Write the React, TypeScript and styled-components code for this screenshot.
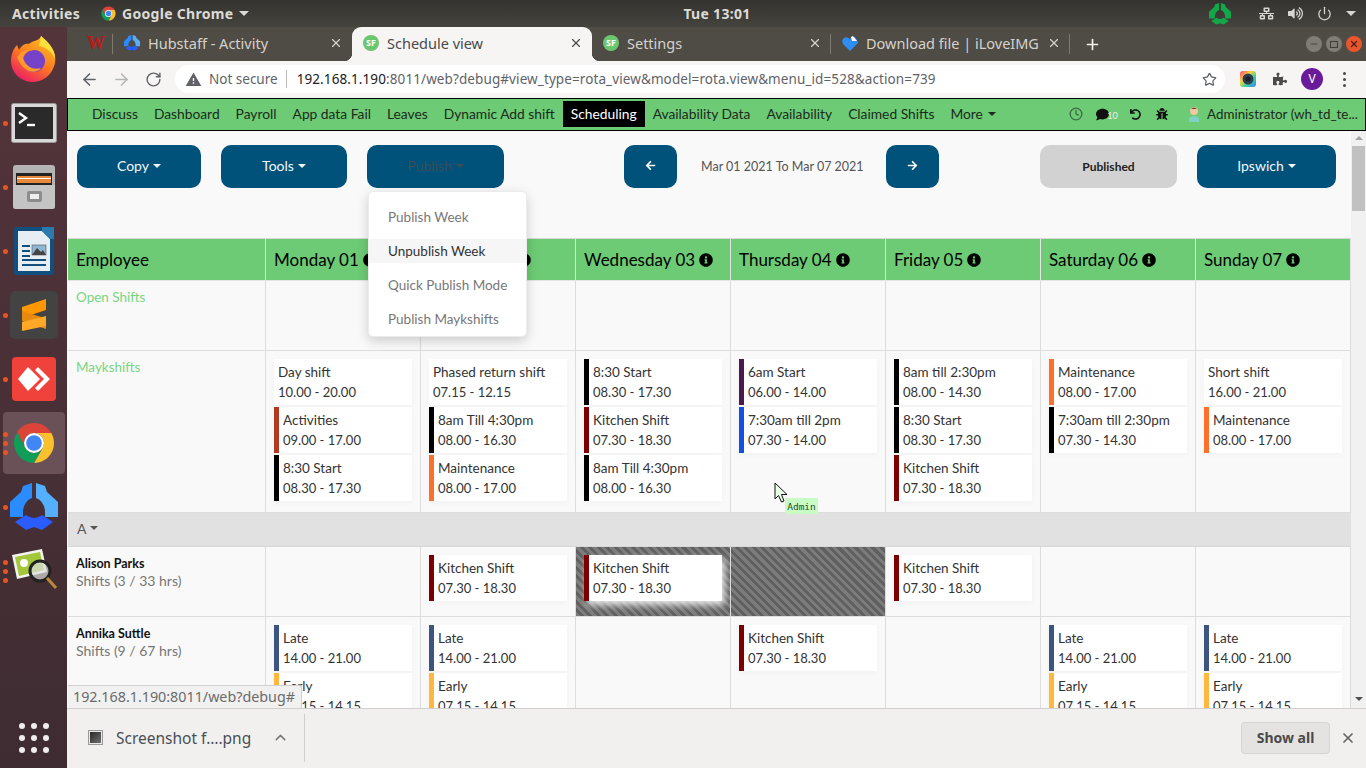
import React from "react";
import styled, { createGlobalStyle } from "styled-components";
import { ArrowLeft, ArrowRight, RotateCw, Star, X, Plus, ChevronUp, Minus, Clock } from "lucide-react";
import {
  FaArrowLeft,
  FaArrowRight,
  FaBug,
  FaComment,
  FaInfoCircle,
  FaNetworkWired,
  FaPuzzlePiece,
  FaUndo,
  FaVolumeUp,
} from "react-icons/fa";
import { FiPower } from "react-icons/fi";
import { MdWarning } from "react-icons/md";

const pageFont = `Lato, "Open Sans", sans-serif`;
const uiFont = `"Noto Sans", "Open Sans", sans-serif`;

const GlobalStyle = createGlobalStyle`
  html, body { margin: 0; padding: 0; width: 1366px; height: 768px; overflow: hidden; }
  * { box-sizing: border-box; }
`;

const Screen = styled.div`
  width: 1366px;
  height: 768px;
  display: flex;
  flex-direction: column;
  overflow: hidden;
  font-family: ${uiFont};
`;

const TopBar = styled.div`
  height: 27px;
  flex: none;
  display: flex;
  align-items: center;
  position: relative;
  padding-left: 12px;
  color: #dcdad5;
  font-size: 14px;
  font-weight: 700;
  letter-spacing: 0.3px;
  background: linear-gradient(#34332f, #45433e);
`;

const TopLabel = styled.span<{ $ml?: number }>`
  margin-left: ${(p) => p.$ml ?? 0}px;
  display: flex;
  align-items: center;
  white-space: nowrap;
`;

const Clockface = styled.span`
  position: absolute;
  left: 68px;
  right: 0;
  text-align: center;
  pointer-events: none;
`;

const Tray = styled.div`
  margin-left: auto;
  display: flex;
  align-items: center;
  padding-right: 10px;
  gap: 14px;
  color: #d8d6d0;
`;

const Caret = styled.span<{ $color?: string; $size?: number; $ml?: number }>`
  display: inline-block;
  width: 0;
  height: 0;
  margin-left: ${(p) => p.$ml ?? 4}px;
  border-left: ${(p) => p.$size ?? 4}px solid transparent;
  border-right: ${(p) => p.$size ?? 4}px solid transparent;
  border-top: ${(p) => p.$size ?? 4}px solid ${(p) => p.$color ?? "currentColor"};
`;

const Main = styled.div`
  flex: 1;
  display: flex;
  min-height: 0;
`;

const Dock = styled.aside`
  width: 67px;
  flex: none;
  display: flex;
  flex-direction: column;
  align-items: center;
  padding-top: 1px;
  gap: 2px;
  background: linear-gradient(#54343b, #3e2c32);
`;

const DockItem = styled.div<{ $active?: boolean }>`
  position: relative;
  width: 62px;
  height: 62px;
  flex: none;
  display: flex;
  align-items: center;
  justify-content: center;
  border-radius: 4px;
  background: ${(p) => (p.$active ? "#6a5158" : "transparent")};
`;

const DockDots = styled.div`
  position: absolute;
  left: 0;
  top: 0;
  bottom: 0;
  display: flex;
  flex-direction: column;
  justify-content: center;
  gap: 4px;
`;

const DockDot = styled.span`
  width: 5px;
  height: 5px;
  border-radius: 50%;
  background: #e95420;
`;

const AppGrid = styled.div`
  margin-top: auto;
  height: 60px;
  display: grid;
  grid-template-columns: repeat(3, 6px);
  gap: 6px;
  align-content: center;
`;

const AppDot = styled.span`
  width: 6px;
  height: 6px;
  border-radius: 50%;
  background: #f0eeee;
`;

const Chrome = styled.div`
  flex: 1;
  min-width: 0;
  display: flex;
  flex-direction: column;
`;

const TabStrip = styled.div`
  height: 34px;
  flex: none;
  display: flex;
  align-items: stretch;
  background: #4f4c45;
  color: #d5d2cc;
  font-size: 14.5px;
`;

const Tab = styled.div<{ $w: number; $active?: boolean; $sep?: boolean }>`
  width: ${(p) => p.$w}px;
  flex: none;
  position: relative;
  display: flex;
  align-items: center;
  padding: 0 9px 2px 11px;
  gap: 8px;
  white-space: nowrap;
  background: ${(p) => (p.$active ? "#f6f5f4" : "transparent")};
  color: ${(p) => (p.$active ? "#4a4a4a" : "#d5d2cc")};
  border-radius: ${(p) => (p.$active ? "9px 9px 0 0" : "0")};
  &::before {
    content: "";
    display: ${(p) => (p.$active ? "block" : "none")};
    position: absolute;
    left: -8px;
    bottom: 0;
    width: 8px;
    height: 8px;
    background: radial-gradient(circle at 0 0, transparent 8px, #f6f5f4 8.5px);
  }
  &::after {
    content: "";
    display: ${(p) => (p.$sep || p.$active ? "block" : "none")};
    position: absolute;
    right: ${(p) => (p.$active ? "-8px" : "0")};
    top: ${(p) => (p.$active ? "auto" : "7px")};
    bottom: ${(p) => (p.$active ? "0" : "7px")};
    width: ${(p) => (p.$active ? "8px" : "1px")};
    height: ${(p) => (p.$active ? "8px" : "auto")};
    background: ${(p) =>
      p.$active ? "radial-gradient(circle at 100% 0, transparent 8px, #f6f5f4 8.5px)" : "#7c7970"};
  }
`;

const TabTitle = styled.span`
  flex: 1;
  overflow: hidden;
`;

const Favicon = styled.span`
  width: 16px;
  height: 16px;
  flex: none;
  border-radius: 50%;
  background: #6cc56f;
  color: #fff;
  font-size: 9px;
  line-height: 16px;
  font-weight: 700;
  text-align: center;
`;

const PinnedMark = styled.span`
  font-family: "Liberation Serif", serif;
  font-weight: 700;
  font-size: 18px;
  color: #c01818;
  margin-left: 9px;
`;

const WindowButtons = styled.div`
  margin-left: auto;
  display: flex;
  align-items: center;
  gap: 4px;
  padding-right: 4px;
`;

const WindowButton = styled.span<{ $close?: boolean }>`
  width: 16px;
  height: 16px;
  border-radius: 50%;
  display: flex;
  align-items: center;
  justify-content: center;
  color: ${(p) => (p.$close ? "#4a2015" : "#3e3d39")};
  background: ${(p) => (p.$close ? "#e9562c" : "#7f7c75")};
`;

const Maximise = styled.span`
  width: 8px;
  height: 7px;
  border: 1px solid #3e3d39;
`;

const NewTab = styled.span`
  display: flex;
  align-items: center;
  margin-left: 14px;
  color: #f0efec;
`;

const Toolbar = styled.div`
  height: 37px;
  flex: none;
  display: flex;
  align-items: center;
  background: #f6f5f4;
  padding: 0 0 1px 6px;
  color: #5f6368;
`;

const NavIcon = styled.span<{ $w?: number }>`
  width: ${(p) => p.$w ?? 32}px;
  display: flex;
  justify-content: center;
`;

const UrlPill = styled.div`
  width: 1050px;
  height: 28px;
  margin-left: 6px;
  display: flex;
  align-items: center;
  border-radius: 14px;
  background: #fff;
  padding: 0 8px 0 10px;
  font-size: 13.5px;
`;

const NotSecure = styled.span`
  margin-left: 7px;
  padding-right: 8px;
  border-right: 1px solid #b9bbbe;
  line-height: 18px;
  color: #5f6368;
`;

const Host = styled.span`
  margin-left: 10px;
  color: #202124;
  letter-spacing: 0.1px;
`;

const UrlRest = styled.span`
  color: #5f6368;
  letter-spacing: 0.1px;
  flex: 1;
`;

const ProfileBadge = styled.span`
  width: 22px;
  height: 22px;
  border-radius: 50%;
  background: #6a1b9a;
  color: #fff;
  font-size: 12px;
  line-height: 22px;
  text-align: center;
`;

const MenuDots = styled.span`
  display: flex;
  flex-direction: column;
  gap: 3px;
`;

const MenuDot = styled.span`
  width: 3px;
  height: 3px;
  border-radius: 50%;
  background: #4a4a4a;
`;

const WebPage = styled.div`
  flex: 1;
  min-height: 0;
  display: flex;
  flex-direction: column;
  font-family: ${pageFont};
`;

const Navbar = styled.nav`
  height: 33px;
  flex: none;
  display: flex;
  align-items: center;
  padding: 0 0 1px 16px;
  border: 1px solid #000;
  background: #6ccb74;
  font-size: 13.8px;
  color: #1c2a20;
`;

const NavLink = styled.span<{ $active?: boolean }>`
  height: 26px;
  line-height: 26px;
  padding: 0 8px;
  white-space: nowrap;
  background: ${(p) => (p.$active ? "#000" : "transparent")};
  color: ${(p) => (p.$active ? "#fff" : "inherit")};
  display: flex;
  align-items: center;
`;

const NavTools = styled.div`
  margin-left: auto;
  display: flex;
  align-items: center;
  color: #111;
  padding-right: 5px;
`;

const NavTool = styled.span<{ $w: number }>`
  width: ${(p) => p.$w}px;
  display: flex;
  align-items: center;
  justify-content: center;
`;

const ChatCount = styled.span`
  color: #f0f0f0;
  font-size: 9px;
  margin-left: -2px;
  padding-top: 3px;
`;

const UserName = styled.span`
  width: 153px;
  color: #1c2a20;
  font-size: 13.4px;
  white-space: nowrap;
`;

const Content = styled.div`
  flex: 1;
  min-height: 0;
  position: relative;
  display: flex;
  background: #f9f9f9;
  overflow: hidden;
`;

const Scroller = styled.div`
  flex: 1;
  min-width: 0;
  margin-left: 1px;
  overflow: hidden;
`;

const Actions = styled.div`
  height: 107px;
  display: flex;
  align-items: flex-start;
  padding: 14px 15px 0 9px;
`;

const ActionGroup = styled.div<{ $ml?: string; $gap: number }>`
  display: flex;
  align-items: center;
  gap: ${(p) => p.$gap}px;
  margin-left: ${(p) => p.$ml ?? "0"};
`;

const ActionButton = styled.button<{ $w: number; $muted?: boolean }>`
  width: ${(p) => p.$w}px;
  height: 43px;
  border: none;
  border-radius: 10px;
  padding: 0 0 2px;
  background: #00527a;
  color: ${(p) => (p.$muted ? "#3c4d56" : "#f2f7fa")};
  font: 14px ${pageFont};
  display: flex;
  align-items: center;
  justify-content: center;
`;

const StatusPill = styled.div`
  width: 137px;
  height: 43px;
  border-radius: 10px;
  background: #d2d2d2;
  color: #222;
  font-size: 12px;
  font-weight: 700;
  display: flex;
  align-items: center;
  justify-content: center;
`;

const DateRange = styled.span`
  width: 161px;
  text-align: center;
  font-size: 12.5px;
  color: #555;
  white-space: nowrap;
  padding-bottom: 1px;
`;

const Dropdown = styled.div`
  position: absolute;
  left: 301px;
  top: 60px;
  width: 159px;
  height: 146px;
  padding-top: 13px;
  display: flex;
  flex-direction: column;
  gap: 10px;
  border: 1px solid #ececec;
  border-radius: 5px;
  background: #fff;
  box-shadow: 0 4px 12px rgba(0, 0, 0, 0.18);
  font-size: 13.5px;
  z-index: 3;
`;

const DropdownItem = styled.div<{ $hover?: boolean }>`
  height: 24px;
  line-height: 24px;
  padding-left: 19px;
  color: ${(p) => (p.$hover ? "#333" : "#777")};
  background: ${(p) => (p.$hover ? "#f6f6f6" : "transparent")};
`;

const Row = styled.div<{ $h: number; $head?: boolean }>`
  height: ${(p) => p.$h}px;
  display: grid;
  grid-template-columns: 198px repeat(7, 155px);
  background: ${(p) => (p.$head ? "#6ccb74" : "transparent")};
  border-top: ${(p) => (p.$head ? "1px solid #d9d9d9" : "none")};
`;

const HeadCell = styled.div`
  display: flex;
  align-items: center;
  gap: 4px;
  padding-left: 8px;
  color: #000;
  font-size: 17px;
  border-right: 1px solid #e3e3e3;
  border-bottom: 1px solid #e3e3e3;
  white-space: nowrap;
`;

const NameCell = styled.div`
  padding: 8px;
  border-right: 1px solid #ddd;
  border-bottom: 1px solid #ddd;
`;

const AreaLabel = styled.div`
  color: #7ad67f;
  font-size: 13.5px;
  line-height: 16px;
`;

const EmployeeName = styled.div`
  color: #111;
  font-size: 12.5px;
  font-weight: 700;
  line-height: 17px;
`;

const EmployeeHours = styled.div`
  color: #777;
  font-size: 14px;
  line-height: 17px;
`;

const DayCell = styled.div<{ $unavailable?: boolean }>`
  padding: 8px 8px 0;
  display: flex;
  flex-direction: column;
  gap: 2px;
  overflow: hidden;
  border-right: 1px solid #ddd;
  border-bottom: 1px solid #ddd;
  background: ${(p) =>
    p.$unavailable
      ? "repeating-linear-gradient(45deg, #7c7c7c 0 3px, #606060 3px 6px)"
      : "transparent"};
`;

const ShiftCard = styled.div<{ $bar?: string; $glow?: boolean }>`
  width: 138px;
  height: 46px;
  flex: none;
  padding: 1px 0 0 4px;
  display: flex;
  flex-direction: column;
  justify-content: center;
  gap: 3px;
  background: #fff;
  border-left: ${(p) => (p.$bar ? `5px solid ${p.$bar}` : "none")};
  box-shadow: ${(p) =>
    p.$glow ? "3px 4px 7px rgba(255,255,255,0.85)" : "0 2px 6px rgba(0,0,0,0.03)"};
  color: #333;
`;

const ShiftTitle = styled.span`
  font-size: 13.5px;
  line-height: 17px;
  white-space: nowrap;
`;

const ShiftTime = styled.span`
  font-size: 13px;
  line-height: 17px;
  white-space: nowrap;
`;

const GroupRow = styled.div`
  height: 34px;
  display: flex;
  align-items: center;
  padding: 0 0 3px 9px;
  background: #e2e1e2;
  color: #555;
  font-size: 14px;
  border-bottom: 1px solid #d8d8d8;
`;

const ScrollTrack = styled.div`
  width: 15px;
  flex: none;
  position: relative;
  background: #f1f1f1;
  display: flex;
  flex-direction: column;
  align-items: center;
  padding-top: 5px;
`;

const ScrollUp = styled.span`
  width: 0;
  height: 0;
  border-left: 4px solid transparent;
  border-right: 4px solid transparent;
  border-bottom: 4px solid #a3a3a3;
`;

const ScrollThumb = styled.span`
  width: 13px;
  height: 65px;
  margin-top: 6px;
  background: #c1c1c1;
`;

const ScrollDown = styled.span`
  margin-top: auto;
  margin-bottom: 7px;
  width: 0;
  height: 0;
  border-left: 4px solid transparent;
  border-right: 4px solid transparent;
  border-top: 4px solid #505050;
`;

const StatusBubble = styled.div`
  position: absolute;
  left: 1px;
  bottom: 0;
  height: 23px;
  width: 234px;
  padding-left: 5px;
  line-height: 22px;
  font-family: ${uiFont};
  font-size: 14.3px;
  white-space: nowrap;
  color: #6b6b6b;
  background: #f1f1f1;
  border-top: 1px solid #d0d0d0;
  border-right: 1px solid #d0d0d0;
  border-top-right-radius: 3px;
  z-index: 4;
`;

const CursorMark = styled.span`
  position: absolute;
  left: 707px;
  top: 351px;
  z-index: 3;
`;

const AdminTag = styled.span`
  position: absolute;
  left: 718px;
  top: 367px;
  width: 33px;
  height: 16px;
  line-height: 18px;
  text-align: center;
  font-family: "DejaVu Sans Mono", monospace;
  font-size: 9.5px;
  color: #2c4a2c;
  background: #c9fbc4;
  z-index: 3;
`;

const DownloadBar = styled.div`
  height: 60px;
  flex: none;
  display: flex;
  align-items: center;
  background: #f1f0ee;
  border-top: 1px solid #cfcfcf;
  padding: 0 0 2px 21px;
  color: #4a4f55;
  font-family: ${uiFont};
  font-size: 15.5px;
`;

const FileThumb = styled.span`
  width: 15px;
  height: 15px;
  flex: none;
  border: 1px solid #9a9a9a;
  background: linear-gradient(135deg, #222, #777);
  outline: 1px solid #e8e8e8;
  outline-offset: -2px;
`;

const FileName = styled.span`
  margin-left: 13px;
  white-space: nowrap;
`;

const Expand = styled(ChevronUp)`
  margin-left: 21px;
  color: #777;
`;

const FileSep = styled.span`
  margin-left: 15px;
  width: 1px;
  height: 48px;
  background: #cfcfcf;
`;

const ShowAll = styled.button`
  margin-left: auto;
  width: 89px;
  height: 32px;
  border: 1px solid #d5d4d2;
  border-radius: 4px;
  background: #e4e3e1;
  color: #4a4a4a;
  font: 700 14px ${uiFont};
`;

const CloseBar = styled.span`
  width: 36px;
  display: flex;
  justify-content: center;
  color: #666;
`;

const ChromeLogo = ({ size }: { size: number }) => (
  <svg width={size} height={size} viewBox="0 0 48 48">
    <path fill="#db4437" d="M41.32 14A20 20 0 0 0 7.2 13.2L15.3 29A10 10 0 0 1 24 14Z" />
    <path fill="#fbc02d" d="M41.32 14H24A10 10 0 0 1 32.66 29L24 44A20 20 0 0 0 41.32 14Z" />
    <path fill="#0f9d58" d="M24 44L32.66 29A10 10 0 0 1 15.34 29L7.2 13.2A20 20 0 0 0 24 44Z" />
    <circle cx="24" cy="24" r="10" fill="#fff" />
    <circle cx="24" cy="24" r="7.8" fill="#4285f4" />
  </svg>
);

const HubLogo = ({ size, a, b, c }: { size: number; a: string; b: string; c: string }) => (
  <svg width={size} height={size} viewBox="0 0 48 48">
    <path fill={a} d="M22 0V15Q14 18 13 28V34H0V19L11 9L13 3Z" />
    <path fill={b} d="M26 0V15Q34 18 35 28V34H48V19L37 9L35 3Z" />
    <path fill={c} d="M5 39L16 32Q24 38 32 32L43 39L32 47L24 44L16 47Z" />
  </svg>
);

const Firefox = () => (
  <svg width="46" height="48" viewBox="0 0 46 48">
    <defs>
      <linearGradient id="ff" x1="0.8" y1="0" x2="0.2" y2="1">
        <stop offset="0" stopColor="#ffc51f" />
        <stop offset="0.5" stopColor="#ff7a1f" />
        <stop offset="1" stopColor="#e8166c" />
      </linearGradient>
    </defs>
    <path fill="url(#ff)" d="M30 1C33 6 40 10 43 17C48 30 38 47 22 47C9 47 0 37 0 26C0 19 3 13 6 10L8 15C10 11 14 8 18 9C22 5 29 6 30 1Z" />
    <path fill="#ffdf3c" d="M30 1C37 7 44 13 44 24C40 15 34 12 28 11Z" />
    <circle cx="23" cy="26" r="11" fill="#7542c8" />
    <path fill="#ff9a2b" d="M6 22C10 16 16 13 23 15C17 15 13 18 12 23C14 30 21 36 30 33C25 40 12 38 6 22Z" />
  </svg>
);

const Terminal = () => (
  <svg width="46" height="40" viewBox="0 0 46 40">
    <rect x="0.5" y="0.5" width="45" height="39" rx="2" fill="#d8d8d8" stroke="#999" />
    <rect x="4" y="4" width="38" height="32" fill="#2a2a2a" />
    <path d="M8 10L15 15L8 20" fill="none" stroke="#fff" strokeWidth="2.4" />
    <path d="M16 22H24" stroke="#fff" strokeWidth="2.4" />
  </svg>
);

const Files = () => (
  <svg width="42" height="44" viewBox="0 0 42 44">
    <rect x="0" y="0" width="42" height="44" rx="3" fill="#b4b4b4" />
    <rect x="3" y="8" width="36" height="12" fill="#222" />
    <rect x="4" y="11" width="34" height="7" fill="#e88a3c" />
    <rect x="4" y="13" width="34" height="1" fill="#fff" />
    <path fill="#c4c4c4" d="M0 20H42V41Q42 44 39 44H3Q0 44 0 41Z" />
    <rect x="14" y="26" width="15" height="11" rx="2" fill="#8c8c8c" />
    <rect x="17" y="29" width="9" height="5" fill="#eee" />
  </svg>
);

const Writer = () => (
  <svg width="40" height="48" viewBox="0 0 40 48">
    <rect width="40" height="48" rx="3" fill="#114f7e" />
    <path fill="#e6edf3" d="M4 4H28L36 12V44H4Z" />
    <path fill="#2a7ab0" d="M28 0H40V12H36L28 4Z" />
    <rect x="18" y="18" width="14" height="10" fill="#8fb6d2" stroke="#555" strokeWidth="0.6" />
    <path fill="#444" d="M18 28L23 21L27 25L29 23L32 28Z" />
    <path stroke="#114f7e" strokeWidth="2" d="M8 19H16M8 24H16M8 29H16M8 33H32M8 38H32" />
  </svg>
);

const Sublime = () => (
  <svg width="48" height="48" viewBox="0 0 48 48">
    <rect width="48" height="48" rx="5" fill="#434343" />
    <path fill="#ff9800" d="M36 8V19L12 27V16Z" />
    <path fill="#e88a10" d="M12 20L36 27.5V38L12 30Z" />
    <path fill="#ffa726" d="M36 25V35L12 40V31Z" />
  </svg>
);

const AnyDesk = () => (
  <svg width="44" height="44" viewBox="0 0 44 44">
    <rect width="44" height="44" rx="4" fill="#f0413a" />
    <path fill="#fff" d="M16 10L28 22L16 34L6 22Z" />
    <path fill="#fff" d="M26 10L38 22L26 34L23 31L32 22L23 13Z" />
  </svg>
);

const Viewer = () => (
  <svg width="46" height="46" viewBox="0 0 46 46">
    <path fill="#f3f3ee" d="M1 7L31 1L36 24L6 31Z" />
    <path fill="#a4c639" d="M4 9L29 4L33 22L8 28Z" />
    <circle cx="13" cy="15" r="4" fill="#fff" />
    <circle cx="29" cy="23" r="10" fill="#ddd" fillOpacity="0.7" stroke="#222" strokeWidth="3" />
    <path d="M36 30L45 40" stroke="#b98a3a" strokeWidth="3" />
  </svg>
);

const Heart = () => (
  <svg width="16" height="15" viewBox="0 0 16 15">
    <path fill="#2f8cf0" d="M8 15L1 8Q-1 4 2 2Q5 0 8 3L10 1H13L16 6Q16 8 14 9Z" />
    <path fill="#fff" d="M9 1L11 0L15 5L10 5Z" />
  </svg>
);

const Lens = () => (
  <svg width="16" height="16" viewBox="0 0 16 16">
    <rect width="16" height="16" rx="3" fill="url(#lens)" />
    <defs>
      <linearGradient id="lens" x1="0" y1="0" x2="1" y2="1">
        <stop offset="0" stopColor="#ff3d7f" />
        <stop offset="0.35" stopColor="#ffd23d" />
        <stop offset="0.65" stopColor="#36d1a0" />
        <stop offset="1" stopColor="#3d7dff" />
      </linearGradient>
    </defs>
    <circle cx="8" cy="8" r="5.5" fill="#2c3e50" />
    <circle cx="8" cy="8" r="2.5" fill="#17212b" />
  </svg>
);

const Avatar = () => (
  <svg width="12" height="16" viewBox="0 0 12 16">
    <circle cx="6" cy="5" r="4" fill="#f1c9a5" />
    <path fill="#6d4128" d="M2 4Q6 -1 10 4L9 3H3Z" />
    <path fill="#7fd1c4" d="M1 16V12Q6 8 11 12V16Z" />
  </svg>
);

const MousePointer = () => (
  <svg width="14" height="21" viewBox="0 0 14 21">
    <path fill="#e8ffe8" stroke="#111" d="M1 1V17L4.5 13.5L7.5 20L10 19L7.5 12.5H13Z" />
  </svg>
);

type Shift = { title: string; time: string; bar?: string; glow?: boolean };

const BLACK = "#000";
const RED = "#7d0000";
const ORANGE = "#ff6f2c";
const BLUE = "#3b5580";
const GOLD = "#ffb83b";

const kitchen: Shift = { title: "Kitchen Shift", time: "07.30 - 18.30", bar: RED };
const start830: Shift = { title: "8:30 Start", time: "08.30 - 17.30", bar: BLACK };
const till430: Shift = { title: "8am Till 4:30pm", time: "08.00 - 16.30", bar: BLACK };
const maintenance: Shift = { title: "Maintenance", time: "08.00 - 17.00", bar: ORANGE };
const late: Shift = { title: "Late", time: "14.00 - 21.00", bar: BLUE };
const early: Shift = { title: "Early", time: "07.15 - 14.15", bar: GOLD };

const days = ["Monday 01", "Tuesday 02", "Wednesday 03", "Thursday 04", "Friday 05", "Saturday 06", "Sunday 07"];

const navLinks = [
  "Discuss",
  "Dashboard",
  "Payroll",
  "App data Fail",
  "Leaves",
  "Dynamic Add shift",
  "Scheduling",
  "Availability Data",
  "Availability",
  "Claimed Shifts",
];

const maykshifts: Shift[][] = [
  [{ title: "Day shift", time: "10.00 - 20.00" }, { title: "Activities", time: "09.00 - 17.00", bar: "#b03a1f" }, start830],
  [{ title: "Phased return shift", time: "07.15 - 12.15" }, till430, maintenance],
  [start830, kitchen, till430],
  [
    { title: "6am Start", time: "06.00 - 14.00", bar: "#4a1a4f" },
    { title: "7:30am till 2pm", time: "07.30 - 14.00", bar: "#1450e0" },
  ],
  [{ title: "8am till 2:30pm", time: "08.00 - 14.30", bar: BLACK }, start830, kitchen],
  [maintenance, { title: "7:30am till 2:30pm", time: "07.30 - 14.30", bar: BLACK }],
  [{ title: "Short shift", time: "16.00 - 21.00" }, maintenance],
];

const alison: Shift[][] = [[], [kitchen], [{ ...kitchen, glow: true }], [], [kitchen], [], []];
const annika: Shift[][] = [[late, early], [late, early], [], [kitchen], [], [late, early], [late, early]];

const DayCells = ({ shifts, striped = [] }: { shifts: Shift[][]; striped?: number[] }) => (
  <>
    {shifts.map((list, i) => (
      <DayCell key={i} $unavailable={striped.includes(i)}>
        {list.map((s, j) => (
          <ShiftCard key={j} $bar={s.bar} $glow={s.glow}>
            <ShiftTitle>{s.title}</ShiftTitle>
            <ShiftTime>{s.time}</ShiftTime>
          </ShiftCard>
        ))}
      </DayCell>
    ))}
  </>
);

const Dots = ({ n }: { n: number }) => (
  <DockDots>
    {Array.from({ length: n }).map((_, i) => (
      <DockDot key={i} />
    ))}
  </DockDots>
);

export default function App() {
  return (
    <Screen>
      <GlobalStyle />
      <TopBar>
        <TopLabel>Activities</TopLabel>
        <TopLabel $ml={20}>
          <ChromeLogo size={17} />
        </TopLabel>
        <TopLabel $ml={5}>
          Google Chrome
          <Caret $ml={6} $size={5} />
        </TopLabel>
        <Clockface>Tue 13:01</Clockface>
        <Tray>
          <HubLogo size={22} a="#12a84a" b="#12a84a" c="#12a84a" />
          <TopLabel $ml={14}>
            <FaNetworkWired size={15} />
          </TopLabel>
          <FaVolumeUp size={15} />
          <FiPower size={15} />
          <Caret $size={5} $ml={0} />
        </Tray>
      </TopBar>
      <Main>
        <Dock>
          <DockItem>
            <Firefox />
          </DockItem>
          <DockItem>
            <Dots n={1} />
            <Terminal />
          </DockItem>
          <DockItem>
            <Dots n={1} />
            <Files />
          </DockItem>
          <DockItem>
            <Dots n={1} />
            <Writer />
          </DockItem>
          <DockItem>
            <Dots n={1} />
            <Sublime />
          </DockItem>
          <DockItem>
            <Dots n={1} />
            <AnyDesk />
          </DockItem>
          <DockItem $active>
            <Dots n={3} />
            <ChromeLogo size={48} />
          </DockItem>
          <DockItem>
            <Dots n={1} />
            <HubLogo size={48} a="#2a8cff" b="#54b0ff" c="#2a5cff" />
          </DockItem>
          <DockItem>
            <Dots n={3} />
            <Viewer />
          </DockItem>
          <AppGrid>
            {Array.from({ length: 9 }).map((_, i) => (
              <AppDot key={i} />
            ))}
          </AppGrid>
        </Dock>
        <Chrome>
          <TabStrip>
            <Tab $w={46} $sep>
              <PinnedMark>W</PinnedMark>
            </Tab>
            <Tab $w={239}>
              <HubLogo size={16} a="#2a8cff" b="#54b0ff" c="#2a5cff" />
              <TabTitle>Hubstaff - Activity</TabTitle>
              <X size={14} />
            </Tab>
            <Tab $w={240} $active>
              <Favicon>SF</Favicon>
              <TabTitle>Schedule view</TabTitle>
              <X size={14} />
            </Tab>
            <Tab $w={239} $sep>
              <Favicon>SF</Favicon>
              <TabTitle>Settings</TabTitle>
              <X size={14} />
            </Tab>
            <Tab $w={239} $sep>
              <Heart />
              <TabTitle>Download file | iLoveIMG</TabTitle>
              <X size={14} />
            </Tab>
            <NewTab>
              <Plus size={17} strokeWidth={2.4} />
            </NewTab>
            <WindowButtons>
              <WindowButton>
                <Minus size={10} />
              </WindowButton>
              <WindowButton>
                <Maximise />
              </WindowButton>
              <WindowButton $close>
                <X size={10} strokeWidth={3} />
              </WindowButton>
            </WindowButtons>
          </TabStrip>
          <Toolbar>
            <NavIcon>
              <ArrowLeft size={19} />
            </NavIcon>
            <NavIcon>
              <ArrowRight size={19} color="#b4b6b8" />
            </NavIcon>
            <NavIcon>
              <RotateCw size={17} />
            </NavIcon>
            <UrlPill>
              <MdWarning size={17} />
              <NotSecure>Not secure</NotSecure>
              <Host>192.168.1.190</Host>
              <UrlRest>:8011/web?debug#view_type=rota_view&amp;model=rota.view&amp;menu_id=528&amp;action=739</UrlRest>
              <Star size={15} />
            </UrlPill>
            <NavIcon $w={46}>
              <Lens />
            </NavIcon>
            <NavIcon $w={18}>
              <FaPuzzlePiece size={14} color="#4a4a4a" />
            </NavIcon>
            <NavIcon $w={46}>
              <ProfileBadge>V</ProfileBadge>
            </NavIcon>
            <NavIcon $w={18}>
              <MenuDots>
                <MenuDot />
                <MenuDot />
                <MenuDot />
              </MenuDots>
            </NavIcon>
          </Toolbar>
          <WebPage>
            <Navbar>
              {navLinks.map((l) => (
                <NavLink key={l} $active={l === "Scheduling"}>
                  {l}
                </NavLink>
              ))}
              <NavLink>
                More
                <Caret $ml={5} />
              </NavLink>
              <NavTools>
                <NavTool $w={22}>
                  <Clock size={14} color="#3d6b45" strokeWidth={2.2} />
                </NavTool>
                <NavTool $w={40}>
                  <FaComment size={13} />
                  <ChatCount>10</ChatCount>
                </NavTool>
                <NavTool $w={16}>
                  <FaUndo size={11} />
                </NavTool>
                <NavTool $w={38}>
                  <FaBug size={12} />
                </NavTool>
                <NavTool $w={26}>
                  <Avatar />
                </NavTool>
                <UserName>Administrator (wh_td_te...</UserName>
              </NavTools>
            </Navbar>
            <Content>
              <Scroller>
                <Actions>
                  <ActionGroup $gap={20}>
                    <ActionButton $w={124}>
                      Copy
                      <Caret />
                    </ActionButton>
                    <ActionButton $w={126}>
                      Tools
                      <Caret />
                    </ActionButton>
                    <ActionButton $w={137} $muted>
                      Publish
                      <Caret />
                    </ActionButton>
                  </ActionGroup>
                  <ActionGroup $ml="120px" $gap={24}>
                    <ActionButton $w={53}>
                      <FaArrowLeft size={11} />
                    </ActionButton>
                    <DateRange>Mar 01 2021 To Mar 07 2021</DateRange>
                    <ActionButton $w={53}>
                      <FaArrowRight size={11} />
                    </ActionButton>
                  </ActionGroup>
                  <ActionGroup $ml="auto" $gap={20}>
                    <StatusPill>Published</StatusPill>
                    <ActionButton $w={139}>
                      Ipswich
                      <Caret />
                    </ActionButton>
                  </ActionGroup>
                </Actions>
                <Row $h={43} $head>
                  <HeadCell>Employee</HeadCell>
                  {days.map((d) => (
                    <HeadCell key={d}>
                      {d}
                      <FaInfoCircle size={14} />
                    </HeadCell>
                  ))}
                </Row>
                <Row $h={70}>
                  <NameCell>
                    <AreaLabel>Open Shifts</AreaLabel>
                  </NameCell>
                  <DayCells shifts={[[], [], [], [], [], [], []]} />
                </Row>
                <Row $h={162}>
                  <NameCell>
                    <AreaLabel>Maykshifts</AreaLabel>
                  </NameCell>
                  <DayCells shifts={maykshifts} />
                </Row>
                <GroupRow>
                  A
                  <Caret />
                </GroupRow>
                <Row $h={70}>
                  <NameCell>
                    <EmployeeName>Alison Parks</EmployeeName>
                    <EmployeeHours>Shifts (3 / 33 hrs)</EmployeeHours>
                  </NameCell>
                  <DayCells shifts={alison} striped={[2, 3]} />
                </Row>
                <Row $h={160}>
                  <NameCell>
                    <EmployeeName>Annika Suttle</EmployeeName>
                    <EmployeeHours>Shifts (9 / 67 hrs)</EmployeeHours>
                  </NameCell>
                  <DayCells shifts={annika} />
                </Row>
              </Scroller>
              <ScrollTrack>
                <ScrollUp />
                <ScrollThumb />
                <ScrollDown />
              </ScrollTrack>
              <Dropdown>
                <DropdownItem>Publish Week</DropdownItem>
                <DropdownItem $hover>Unpublish Week</DropdownItem>
                <DropdownItem>Quick Publish Mode</DropdownItem>
                <DropdownItem>Publish Maykshifts</DropdownItem>
              </Dropdown>
              <CursorMark>
                <MousePointer />
              </CursorMark>
              <AdminTag>Admin</AdminTag>
              <StatusBubble>192.168.1.190:8011/web?debug#</StatusBubble>
            </Content>
            <DownloadBar>
              <FileThumb />
              <FileName>Screenshot f….png</FileName>
              <Expand size={17} />
              <FileSep />
              <ShowAll>Show all</ShowAll>
              <CloseBar>
                <X size={16} strokeWidth={2.6} />
              </CloseBar>
            </DownloadBar>
          </WebPage>
        </Chrome>
      </Main>
    </Screen>
  );
}
